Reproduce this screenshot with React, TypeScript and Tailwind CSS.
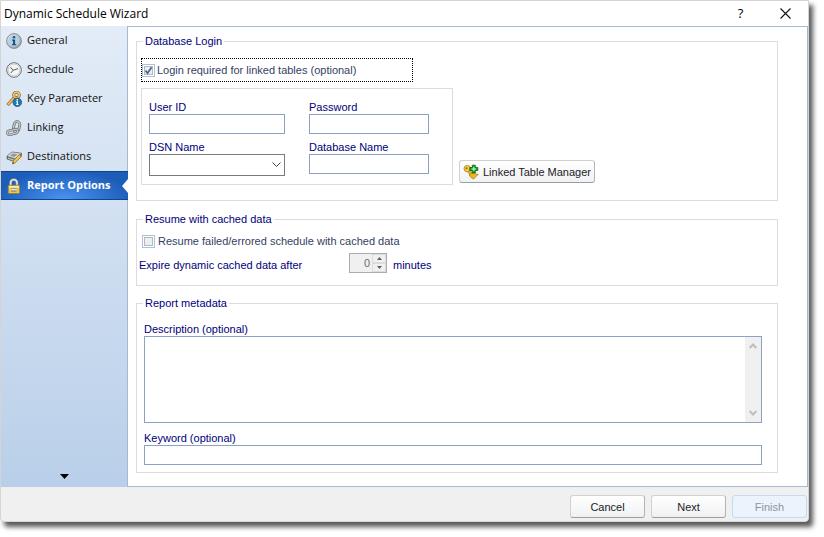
import type { ReactNode } from "react";

const uiFont = "font-['Liberation_Sans',Arial,sans-serif]";
const navFont = "font-['Open_Sans','Noto_Sans',sans-serif]";

function InfoIcon() {
  return (
    <svg width="16" height="16" viewBox="0 0 16 16">
      <defs>
        <linearGradient id="infoRim" x1="0" y1="0" x2="1" y2="1">
          <stop offset="0" stopColor="#e8eef2" />
          <stop offset="1" stopColor="#8d979f" />
        </linearGradient>
      </defs>
      <circle cx="8" cy="8" r="7.4" fill="url(#infoRim)" stroke="#7b848b" strokeWidth="0.9" />
      <circle cx="8" cy="8" r="5.4" fill="#b5d0e3" />
      <circle cx="8" cy="4.3" r="1.3" fill="#1c5583" />
      <path d="M6 6.5h3.1v4.6h1.1v1.2H6v-1.2h1V7.7H6z" fill="#1c5583" />
    </svg>
  );
}

function ClockIcon() {
  return (
    <svg width="16" height="16" viewBox="0 0 16 16">
      <circle cx="8" cy="8" r="7.3" fill="#fdfdfd" stroke="#666b70" strokeWidth="1" />
      <circle cx="8" cy="8" r="6" fill="#f4f4f4" stroke="#c5c9cc" strokeWidth="1" />
      <path d="M4.5 5.2l2.6 3.1L12 6.6M7.1 8.3L4.8 11" fill="none" stroke="#565b60" strokeWidth="1" />
    </svg>
  );
}

function KeysIcon() {
  return (
    <svg width="16" height="16" viewBox="0 0 16 16">
      <path d="M8.500 6.500L1.500 14" stroke="#8d6020" strokeWidth="3.200" fill="none" />
      <path d="M8.500 6.500L1.800 13.700" stroke="#edc56e" strokeWidth="1.800" fill="none" />
      <circle cx="10.500" cy="4" r="2.800" fill="none" stroke="#8d6020" strokeWidth="3" />
      <circle cx="10.500" cy="4" r="2.800" fill="none" stroke="#edc56e" strokeWidth="1.700" />
      <circle cx="11.300" cy="11.300" r="4.300" fill="#2378ad" stroke="#14527e" strokeWidth="0.7" />
      <path d="M10 10.200h2v3h.7v.8H9.900v-.8h.8V11H10zM10.600 8.100h1.400v1.400h-1.400z" fill="#fff" />
    </svg>
  );
}

function ChainIcon() {
  return (
    <svg width="16" height="16" viewBox="0 0 16 16" fill="none">
      <rect x="7.8" y="1.6" width="5.6" height="10" rx="2.8" transform="rotate(12 10.5 6.5)" stroke="#6d7073" strokeWidth="2.8" />
      <rect x="7.8" y="1.6" width="5.6" height="10" rx="2.8" transform="rotate(12 10.5 6.5)" stroke="#c3c6c8" strokeWidth="1.4" />
      <rect x="1.3" y="10" width="10.5" height="4" rx="2" transform="rotate(-14 6.5 12)" stroke="#6d7073" strokeWidth="2.6" />
      <rect x="1.3" y="10" width="10.5" height="4" rx="2" transform="rotate(-14 6.5 12)" stroke="#c6c9cb" strokeWidth="1.300" />
    </svg>
  );
}

function DestinationIcon() {
  return (
    <svg width="16" height="16" viewBox="0 0 16 16">
      <path d="M1 7l5-4 9.5 1.2v2.6L9.5 13 1 10z" fill="#777a7c" stroke="#55585a" strokeWidth="0.7" />
      <path d="M1.2 7L6 3.2l9 1.2-5.3 5.2z" fill="#d3d5d6" />
      <path d="M4 6.8l3-2.2 4.5.7-3.2 2.7z" fill="#96999b" />
      <path d="M2 8.7l6 2v1l-6-2z" fill="#c9cbcc" />
      <path d="M6.5 14.8l.9-3L13.6 5.4l2 1.8-6.3 6.5z" fill="#f0c945" stroke="#8c6b26" strokeWidth="0.7" />
      <path d="M13 6l1.2-1.1 1.6 1.7-1 1.2z" fill="#cf5a48" />
      <path d="M6.3 15l.7-2 1.4 1.2z" fill="#444" />
    </svg>
  );
}

function LockIcon() {
  return (
    <svg width="16" height="16" viewBox="0 0 16 16">
      <path d="M4.6 8V4.8a3.2 3.2 0 0 1 6.4 0V8" fill="none" stroke="#8f9499" strokeWidth="2.6" />
      <path d="M4.6 8V4.8a3.2 3.2 0 0 1 6.4 0V8" fill="none" stroke="#e9ebed" strokeWidth="1.4" />
      <rect x="2.2" y="7.2" width="11.4" height="8.3" rx="1" fill="#e5c75a" stroke="#8f7a2e" strokeWidth="0.8" />
      <path d="M3 8h9.8v1.6H3z" fill="#faf0ae" />
      <path d="M5 10.2h5.5v1.2H5zM5 12.6h5.5v1.2H5z" fill="#8b9093" />
      <path d="M5 11.2h5.5v.8H5z" fill="#f5f5ee" />
    </svg>
  );
}

function TableKeyIcon() {
  return (
    <svg width="16" height="16" viewBox="0 0 16 16">
      <path d="M5.5 6.5l5 6.5" stroke="#a87b10" strokeWidth="3.4" />
      <path d="M5.5 6.5l5 6.5" stroke="#f2c22d" strokeWidth="2" />
      <circle cx="4.2" cy="4.6" r="3.2" fill="#f5cf4c" stroke="#b68a1d" strokeWidth="0.9" />
      <circle cx="3.5" cy="4.3" r="1.1" fill="#9b7419" />
      <path d="M6 11l3-1.8 3 .5 3.3.8-2 1.5-2.6 3L8 13.5z" fill="#f0b71b" stroke="#a57413" strokeWidth="0.7" />
      <path d="M9.3 1.2h3v2.3h2.5v3h-2.5v2.4h-3V6.5H6.8v-3h2.5z" fill="#159a24" stroke="#08620f" strokeWidth="0.8" />
      <path d="M10.3 2.8h1v1.7H13v1h-1.7v1.8h-1V5.5H8.5v-1h1.8z" fill="#d9f7d4" />
    </svg>
  );
}

const steps: { label: string; icon: ReactNode; active?: boolean }[] = [
  { label: "General", icon: <InfoIcon /> },
  { label: "Schedule", icon: <ClockIcon /> },
  { label: "Key Parameter", icon: <KeysIcon /> },
  { label: "Linking", icon: <ChainIcon /> },
  { label: "Destinations", icon: <DestinationIcon /> },
  { label: "Report Options", icon: <LockIcon />, active: true },
];

function Sidebar() {
  return (
    <nav className={`${navFont} flex w-[126px] shrink-0 flex-col bg-linear-to-b from-[#e3ecf7] to-[#b9cfe9] text-[11px] text-[#111]`}>
      {steps.map((step) => (
        <button
          key={step.label}
          type="button"
          className={
            step.active
              ? "relative -mr-px flex h-[29px] items-center gap-[5px] border-y border-[#0b468f] bg-[radial-gradient(ellipse_at_50%_100%,#4a93ef_0%,#1c5db8_75%)] pl-[5px] text-left font-bold text-white"
              : "flex h-[29px] items-center gap-[5px] pl-[5px] text-left"
          }
        >
          {step.icon}
          <span className="whitespace-nowrap">{step.label}</span>
          {step.active && (
            <svg className="absolute top-[7px] right-0" width="6" height="14" viewBox="0 0 6 14">
              <path d="M6 0v14L0 7z" fill="#fff" />
            </svg>
          )}
        </button>
      ))}
      <button type="button" aria-label="More steps" className="mt-auto mb-2 flex justify-center">
        <svg width="9" height="5" viewBox="0 0 9 5">
          <path d="M0 0h9L4.500 5z" fill="#000" />
        </svg>
      </button>
    </nav>
  );
}

function Group({ title, className, children }: { title: string; className: string; children: ReactNode }) {
  return (
    <fieldset className={`min-w-0 border border-[#dcdcdc] ${className}`}>
      <legend className="ml-[6px] h-4 px-[2px] leading-4">{title}</legend>
      {children}
    </fieldset>
  );
}

function Check({ id, checked, children }: { id: string; checked?: boolean; children: ReactNode }) {
  return (
    <>
      <span className="grid size-[13px] shrink-0 place-items-center border border-[#a9c0de] bg-white">
        <input
          id={id}
          type="checkbox"
          defaultChecked={checked}
          className="peer col-start-1 row-start-1 size-[9px] appearance-none border border-[#b4b9c0] bg-[#eceef0]"
        />
        <svg className="pointer-events-none invisible col-start-1 row-start-1 peer-checked:visible" width="9" height="9" viewBox="0 0 9 9">
          <path d="M1.500 4.500l2 2.700L7.600 1.300" fill="none" stroke="#47658f" strokeWidth="1.700" />
        </svg>
      </span>
      <label htmlFor={id} className="text-[#33415f]">{children}</label>
    </>
  );
}

const box = "block h-5 w-full border border-[#8ba2c5] bg-white px-1 outline-none";
const fieldLabel = "block h-[15px] leading-[17px]";
const dialogButton =
  "flex h-[23px] items-center justify-center rounded-[3px] border border-[#cfd1d3] border-b-[#9b9ea1] border-r-[#b2b4b7] bg-linear-to-b from-white to-[#f0f1f3] text-[#222]";

export default function App() {
  return (
    <div className={`${uiFont} h-screen min-h-[537px] bg-white pr-[15px] pb-[15px] text-[11px] text-[#00007b]`}>
      <div className="flex h-full flex-col rounded-b-[4px] border border-[#d4d4d4] bg-[#f0f0f0] shadow-[4px_5px_5px_rgba(0,0,0,0.65)]">
        <header className={`${navFont} flex h-[25px] shrink-0 items-center bg-white pl-[3px] text-black`}>
          <h1 className="text-[12px]">Dynamic Schedule Wizard</h1>
          <button type="button" aria-label="Help" className="ml-auto w-[45px] text-center text-[13px] font-medium">?</button>
          <button type="button" aria-label="Close" className="flex w-[45px] justify-center">
            <svg width="11" height="11" viewBox="0 0 11 11">
              <path d="M.5.5l10 10M10.500.5l-10 10" stroke="#111" strokeWidth="1.100" />
            </svg>
          </button>
        </header>

        <div className="flex min-h-0 flex-1">
          <Sidebar />
          <main className="flex min-w-0 flex-1 flex-col border border-[#a5b9d0] bg-white pt-[6px] pr-[29px] pb-[13px] pl-2">
            <Group title="Database Login" className="pb-[15px]">
              <div className="mt-[9px] ml-1 flex h-6 w-[272px] items-center gap-[2px] border border-dotted border-black">
                <Check id="login-required" checked>Login required for linked tables (optional)</Check>
              </div>
              <div className="mt-[6px] ml-1 flex items-end gap-[6px]">
                <div className="grid grid-cols-[136px_120px] gap-x-6 gap-y-[5px] border border-[#dcdcdc] pt-[10px] pr-[23px] pb-2 pl-[7px]">
                  <div>
                    <label htmlFor="user-id" className={fieldLabel}>User ID</label>
                    <input id="user-id" type="text" className={box} />
                  </div>
                  <div>
                    <label htmlFor="password" className={fieldLabel}>Password</label>
                    <input id="password" type="password" className={box} />
                  </div>
                  <div>
                    <label htmlFor="dsn" className={fieldLabel}>DSN Name</label>
                    <div className="grid">
                      <select id="dsn" className="col-start-1 row-start-1 h-[22px] w-full appearance-none border border-[#7a7a7a] bg-white px-1 outline-none" />
                      <svg className="pointer-events-none col-start-1 row-start-1 mr-1 self-center justify-self-end" width="9" height="6" viewBox="0 0 9 6">
                        <path d="M.5.5l4 4 4-4" fill="none" stroke="#444" />
                      </svg>
                    </div>
                  </div>
                  <div>
                    <label htmlFor="database" className={fieldLabel}>Database Name</label>
                    <input id="database" type="text" className={box} />
                  </div>
                </div>
                <button type="button" className={`${dialogButton} mb-[2px] w-[136px] gap-1`}>
                  <TableKeyIcon />
                  <span className="pt-[2px]">Linked Table Manager</span>
                </button>
              </div>
            </Group>

            <Group title="Resume with cached data" className="mt-[10px] pb-3">
              <div className="mt-[6px] ml-[5px] flex h-4 items-center gap-[3px]">
                <Check id="resume">Resume failed/errored schedule with cached data</Check>
              </div>
              <div className="mt-1 ml-[2px] flex h-5 items-center">
                <label htmlFor="expire" className="w-[210px] pt-1">Expire dynamic cached data after</label>
                <div className="flex h-5 w-[38px] border border-[#acacac] bg-[#f0f0f0]">
                  <input id="expire" type="text" inputMode="numeric" defaultValue="0" className="w-5 bg-transparent text-right text-[#6d6d6d] outline-none" />
                  <div className="ml-[2px] flex flex-1 flex-col">
                    <button type="button" aria-label="Increase" className="flex flex-1 items-center justify-center border border-[#dcdcdc]">
                      <svg width="5" height="3" viewBox="0 0 5 3"><path d="M0 3h5L2.500 0z" fill="#606060" /></svg>
                    </button>
                    <button type="button" aria-label="Decrease" className="flex flex-1 items-center justify-center border border-[#dcdcdc]">
                      <svg width="5" height="3" viewBox="0 0 5 3"><path d="M0 0h5L2.500 3z" fill="#606060" /></svg>
                    </button>
                  </div>
                </div>
                <span className="ml-[6px] pt-1">minutes</span>
              </div>
            </Group>

            <Group title="Report metadata" className="mt-[9px]">
              <div className="pt-[10px] pr-[15px] pb-[7px] pl-[7px]">
                <label htmlFor="description" className={fieldLabel}>Description (optional)</label>
                <div className="mb-[7px] flex h-[87px] border border-[#8ba2c5] bg-white">
                  <textarea id="description" className="min-w-0 flex-1 resize-none overflow-hidden px-1 outline-none" />
                  <div className="flex w-4 flex-col items-center justify-between bg-[#f0f0f0] py-[6px]">
                    <svg width="8" height="6" viewBox="0 0 8 6"><path d="M.7 5L4 1.500 7.300 5" fill="none" stroke="#bdbdbd" strokeWidth="2" /></svg>
                    <svg width="8" height="6" viewBox="0 0 8 6"><path d="M.7 1L4 4.500 7.300 1" fill="none" stroke="#bdbdbd" strokeWidth="2" /></svg>
                  </div>
                </div>
                <label htmlFor="keyword" className={fieldLabel}>Keyword (optional)</label>
                <input id="keyword" type="text" className={box} />
              </div>
            </Group>
          </main>
        </div>

        <footer className="flex h-[34px] shrink-0 justify-end gap-[6px] pt-2 pr-px">
          <button type="button" className={`${dialogButton} w-[75px] pt-[2px]`}>Cancel</button>
          <button type="button" className={`${dialogButton} w-[75px] pt-[2px]`}>Next</button>
          <button type="button" disabled className="flex h-[23px] w-[75px] items-center justify-center rounded-[3px] border border-[#c5daf0] bg-[#ebf4fd] pt-[2px] text-[#8d949e]">
            Finish
          </button>
        </footer>
      </div>
    </div>
  );
}
